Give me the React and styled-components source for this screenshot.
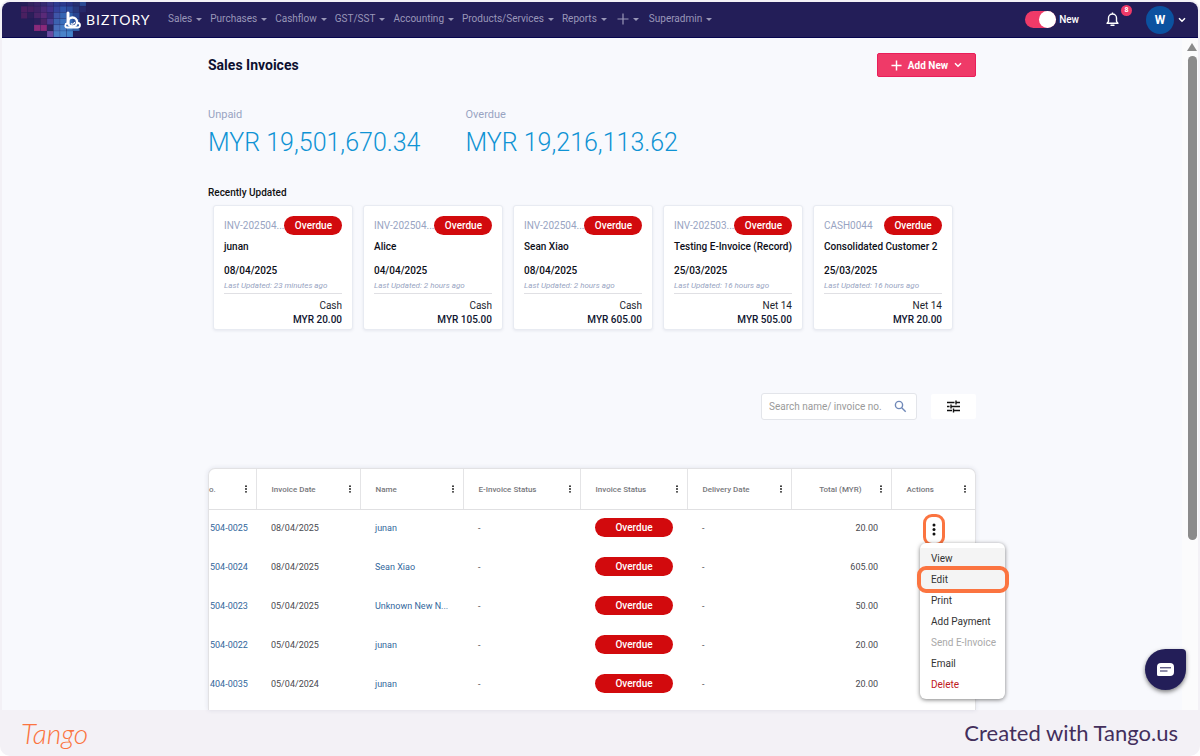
import React from 'react';
import styled, { createGlobalStyle } from 'styled-components';

const GlobalStyle = createGlobalStyle`
  *, *::before, *::after { box-sizing: border-box; }
  body {
    margin: 0;
    background: #ffffff;
    font-family: Roboto, "Liberation Sans", sans-serif;
    font-size: 10px;
    color: #1b1f2e;
  }
  button, input { font: inherit; color: inherit; }
  button { border: 0; padding: 0; background: none; cursor: pointer; }
  a { text-decoration: none; }
  h1, h2, p, dl, dd, dt, ul { margin: 0; padding: 0; }
`;

const Frame = styled.div`
  display: flex;
  flex-direction: column;
  min-height: 100vh;
  padding: 2px 0 0;
  border-radius: 10px;
  background: #f3f1f6;
`;

const AppWindow = styled.div`
  flex: 1;
  display: flex;
  flex-direction: column;
  margin: 0 2px;
  border-radius: 8px 8px 0 0;
  background: #f8f9fd;
`;

const NavBar = styled.header`
  display: flex;
  align-items: center;
  height: 36px;
  padding-right: 12px;
  border-bottom: 1px solid #06054f;
  border-radius: 8px 8px 0 0;
  background: #231e58;
  overflow: hidden;
`;

const Brand = styled.a`
  display: flex;
  align-items: center;
  position: relative;
  width: 166px;
  height: 100%;
  padding-left: 61px;
  gap: 4px;
  color: #ffffff;
  font: 400 14px/16px Lato, sans-serif;
  letter-spacing: 1px;
`;

const Mosaic = styled.svg`
  position: absolute;
  left: 19px;
  top: 0;
`;

const BrandMark = styled.svg`
  position: relative;
`;

const BrandName = styled.span`
  position: relative;
`;

const Menu = styled.nav`
  display: flex;
  align-items: center;
  gap: 8px;
  flex: 1;
`;

const MenuButton = styled.button`
  display: flex;
  align-items: center;
  gap: 4px;
  height: 24px;
  padding: 0 ${(p) => (p.$icon ? '2px' : '0')} 1px;
  color: #9a97b8;
  font-size: 10px;
  line-height: 16px;
  white-space: nowrap;

  &::after {
    content: '';
    border: 3px solid transparent;
    border-top-color: currentColor;
    border-bottom: 0;
  }
`;

const NavTools = styled.div`
  display: flex;
  align-items: center;
`;

const Switch = styled.label`
  display: flex;
  align-items: center;
  gap: 3px;
  margin-right: 27px;
  color: #ffffff;
  font-weight: 500;
  line-height: 16px;
`;

const SwitchInput = styled.input`
  appearance: none;
  display: flex;
  justify-content: flex-end;
  width: 31px;
  height: 17px;
  margin: 0;
  border-radius: 9px;
  background: #ef3a68;

  &::before {
    content: '';
    width: 17px;
    height: 17px;
    border-radius: 50%;
    background: #ffffff;
  }
`;

const BellButton = styled.button`
  position: relative;
  display: flex;
  margin-right: 27px;
`;

const BellCount = styled.span`
  position: absolute;
  left: 15px;
  top: -7px;
  width: 11px;
  height: 11px;
  border-radius: 50%;
  background: #ef3a68;
  color: #ffffff;
  font-size: 7px;
  font-weight: 700;
  line-height: 11px;
  text-align: center;
`;

const AccountButton = styled.button`
  display: flex;
  align-items: center;
  gap: 4px;
`;

const Avatar = styled.span`
  width: 28px;
  height: 28px;
  border-radius: 50%;
  background: #0b52a0;
  color: #ffffff;
  font-size: 12px;
  font-weight: 700;
  line-height: 28px;
  text-align: center;
`;

const Body = styled.div`
  flex: 1;
  display: flex;
  position: relative;
`;

const Main = styled.main`
  flex: 1;
  display: flex;
  justify-content: center;
`;

const Content = styled.div`
  display: flex;
  flex-direction: column;
  width: 100%;
  max-width: 768px;
`;

const PageHeader = styled.div`
  display: flex;
  justify-content: space-between;
  align-items: center;
  margin-top: 15px;
`;

const Title = styled.h1`
  color: #0d1030;
  font-size: 14px;
  font-weight: 700;
  line-height: 24px;
`;

const AddButton = styled.button`
  display: flex;
  align-items: center;
  justify-content: center;
  gap: 6px;
  width: 99px;
  height: 24px;
  border: 1px solid #e91e5a;
  border-radius: 2px;
  background: #ef3a68;
  color: #ffffff;
  font-weight: 700;
`;

const Totals = styled.dl`
  display: flex;
  gap: 45px;
  margin-top: 30px;
`;

const TotalLabel = styled.dt`
  color: #98a4c2;
  font-size: 11px;
  line-height: 16px;
`;

const TotalValue = styled.dd`
  margin-top: 5px;
  color: #0f93d4;
  font-size: 25px;
  font-weight: 300;
  line-height: 30px;
`;

const SectionTitle = styled.h2`
  margin-top: 27px;
  color: #111111;
  font-size: 10px;
  font-weight: 500;
  line-height: 16px;
`;

const Cards = styled.div`
  display: grid;
  grid-template-columns: repeat(5, 140px);
  gap: 10px;
  margin: 4px 0 0 5px;
`;

const Card = styled.article`
  display: flex;
  flex-direction: column;
  height: 125px;
  padding: 10px;
  border: 1px solid #e8ebf2;
  border-radius: 3px;
  background: #ffffff;
  box-shadow: 0 1px 3px #1e285014;
  line-height: 14px;
`;

const CardTop = styled.div`
  display: flex;
  align-items: center;
  justify-content: space-between;
`;

const CardNumber = styled.span`
  color: #98a4c2;
  white-space: nowrap;
`;

const Pill = styled.span`
  display: block;
  flex: none;
  width: ${(p) => (p.$wide ? '78px' : '58px')};
  border-radius: 10px;
  background: #d20a0d;
  color: #ffffff;
  font-size: 10px;
  font-weight: 500;
  line-height: 19px;
  text-align: center;
`;

const CardName = styled.p`
  margin-top: 5px;
  font-weight: 500;
  color: #0c0e18;
  white-space: nowrap;
`;

const CardDate = styled(CardName)`
  margin-top: 10px;
`;

const CardUpdated = styled.p`
  padding: 2px 0 1px;
  border-bottom: 1px solid #e0e0e4;
  color: #98a4c2;
  font-size: 8px;
  font-style: italic;
  line-height: 12px;
`;

const CardTerms = styled.p`
  margin-top: 5px;
  text-align: right;
`;

const CardAmount = styled.p`
  color: #101530;
  font-weight: 500;
  text-align: right;
`;

const Filters = styled.div`
  display: flex;
  justify-content: flex-end;
  align-items: center;
  gap: 14px;
  margin-top: 63px;
`;

const SearchBox = styled.label`
  display: flex;
  align-items: center;
  width: 156px;
  height: 27px;
  padding: 0 9px 0 7px;
  border: 1px solid #e3e5ea;
  border-radius: 3px;
  background: #ffffff;
`;

const SearchInput = styled.input`
  flex: 1;
  min-width: 0;
  padding: 0;
  border: 0;
  outline: 0;
  background: none;
  font-size: 10px;

  &::placeholder { color: #9a9a9a; opacity: 1; }
`;

const FilterButton = styled.button`
  display: flex;
  align-items: center;
  justify-content: center;
  width: 45px;
  height: 25px;
  border-radius: 2px;
  background: #ffffff;
`;

const TablePanel = styled.div`
  flex: 1;
  margin-top: 48px;
  padding-bottom: 6px;
  border: 1px solid #e2e2e4;
  border-bottom: 0;
  border-radius: 7px 7px 0 0;
  background: #ffffff;
  box-shadow: 0 0 5px #1e28501c;
`;

const Table = styled.table`
  width: 100%;
  border-collapse: collapse;
  table-layout: fixed;
`;

const HeadCell = styled.th`
  height: 40px;
  padding: 0;
  border-right: 1px solid #e4e4e6;
  border-bottom: 1px solid #e0e0e2;
  color: #77777c;
  font-size: 8px;
  font-weight: 500;

  &:last-child { border-right: 0; }
`;

const HeadInner = styled.div`
  display: flex;
  align-items: center;
  justify-content: ${(p) => (p.$right ? 'flex-end' : 'space-between')};
  gap: 17px;
  padding: 1px 8px 0 ${(p) => (p.$flush ? '0' : '15px')};
  white-space: nowrap;
`;

const HeadMenu = styled.button`
  display: flex;
`;

const Cell = styled.td`
  position: relative;
  height: 39px;
  padding: 0 13px 2px ${(p) => (p.$flush ? '1px' : '15px')};
  color: #4a4a50;
  font-size: 9px;
  line-height: 14px;
  text-align: ${(p) => (p.$align || 'left')};
  white-space: nowrap;
`;

const CellLink = styled.a`
  color: #33679c;
`;

const RowMenuButton = styled.button`
  position: absolute;
  left: 32px;
  top: 4px;
  display: flex;
  align-items: center;
  justify-content: center;
  width: 22px;
  height: 32px;
  border: 3px solid #fb7440;
  border-radius: 9px;
`;

const ActionMenu = styled.ul`
  position: absolute;
  z-index: 2;
  left: 29px;
  top: 33px;
  width: 85px;
  padding: 5px 0 4px;
  border-radius: 6px;
  background: #ffffff;
  box-shadow: 0 1px 4px #00000080;
  list-style: none;
`;

const ActionItem = styled.li`
  position: relative;
  background: ${(p) => (p.$shaded ? '#f4f4f4' : 'none')};
`;

const ActionButton = styled.button`
  display: block;
  width: 100%;
  padding-left: 11px;
  color: ${(p) => (p.$tone || '#333333')};
  font-size: 10px;
  line-height: 21px;
  text-align: left;
`;

const Highlight = styled.span`
  position: absolute;
  inset: -3px -4px -3px -3px;
  border: 4px solid #fb7440;
  border-radius: 9px;
  pointer-events: none;
`;

const ScrollTrack = styled.div`
  display: flex;
  flex-direction: column;
  align-items: center;
  width: 16px;
  padding: 5px 0 0 4px;
  background: #fbfbfc;
`;

const ScrollThumb = styled.div`
  flex: 484;
  width: 9px;
  margin-top: 5px;
  border-radius: 5px;
  background: #8b8b8b;
`;

const ScrollRest = styled.div`
  flex: 170;
`;

const ChatButton = styled.button`
  position: absolute;
  right: 12px;
  bottom: 20px;
  display: flex;
  align-items: center;
  justify-content: center;
  width: 41px;
  height: 41px;
  border-radius: 50% 4px 50% 50%;
  background: #231e58;
  box-shadow: 0 2px 4px #00000080;
`;

const Footer = styled.footer`
  display: flex;
  align-items: center;
  justify-content: space-between;
  height: 46px;
  padding: 0 22px 0 21px;
  color: #432f5c;
  font: 400 22px/46px Lato, sans-serif;
`;

const TangoLogo = styled.span`
  color: #fb7440;
  font: italic 300 28px/46px Lato, sans-serif;
`;

const mosaicRows = [
  ['#261e59', '#33235f', '#3a2468', '#362a70', '#3a3584', '#2f3b90', '#2c3a8c', '#2a3484', '#27306f', '#2c4b94'],
  ['#4d1f63', '#471f62', '#3f2266', '#4a2a78', '#42308a', '#34429c', '#3054aa', '#2d4c9c', '#28387c', '#26296a'],
  ['#4a2060', '#2c1f5a', '#4a2468', '#5a2a78', '#3a2a78', '#3f55a8', '#3565b2', '#3060ac', '#294590', null],
  [null, null, '#2c1f5c', '#4a2468', '#4a3a90', '#3c62b0', '#3a70bc', '#346cb8', '#2e529c', null],
  [null, null, '#8a2a7a', '#8a2a7a', '#2c2560', '#4a70bc', '#447cc4', '#3c78c0', '#3264ac', null],
  [null, null, null, null, '#6a4aa0', '#4a7cc4', '#4a84ca', '#4484ca', null, null],
];

const navItems = [
  'Sales', 'Purchases', 'Cashflow', 'GST/SST', 'Accounting', 'Products/Services', 'Reports', '+', 'Superadmin',
];

const cards = [
  ['INV-202504...', 'junan', '08/04/2025', '23 minutes ago', 'Cash', 'MYR 20.00'],
  ['INV-202504...', 'Alice', '04/04/2025', '2 hours ago', 'Cash', 'MYR 105.00'],
  ['INV-202504...', 'Sean Xiao', '08/04/2025', '2 hours ago', 'Cash', 'MYR 605.00'],
  ['INV-202503...', 'Testing E-Invoice (Record)', '25/03/2025', '16 hours ago', 'Net 14', 'MYR 505.00'],
  ['CASH0044', 'Consolidated Customer 2', '25/03/2025', '16 hours ago', 'Net 14', 'MYR 20.00'],
];

const columns = [
  ['o.', 47], ['Invoice Date', 104], ['Name', 103], ['E-Invoice Status', 117],
  ['Invoice Status', 107], ['Delivery Date', 104], ['Total (MYR)', 100], ['Actions', 84],
];

const rows = [
  ['504-0025', '08/04/2025', 'junan', '20.00'],
  ['504-0024', '08/04/2025', 'Sean Xiao', '605.00'],
  ['504-0023', '05/04/2025', 'Unknown New N...', '50.00'],
  ['504-0022', '05/04/2025', 'junan', '20.00'],
  ['404-0035', '05/04/2024', 'junan', '20.00'],
];

const actions = ['View', 'Edit', 'Print', 'Add Payment', 'Send E-Invoice', 'Email', 'Delete'];
const actionTones = { 'Send E-Invoice': '#a9a9a9', Delete: '#c01822' };

function Plus({ size, width }) {
  return (
    <svg width={size} height={size} viewBox="0 0 12 12" fill="none" stroke="currentColor" strokeWidth={width}>
      <path d="M6 0.5v11M0.5 6h11" />
    </svg>
  );
}

function Chevron() {
  return (
    <svg width="8" height="6" viewBox="0 0 8 6" fill="none" stroke="#ffffff" strokeWidth="1.5">
      <path d="M1 1.2l3 3 3-3" />
    </svg>
  );
}

function Dots({ large }) {
  return large ? (
    <svg width="4" height="13" viewBox="0 0 4 13" fill="#111111">
      <circle cx="2" cy="2" r="1.5" /><circle cx="2" cy="6.5" r="1.5" /><circle cx="2" cy="11" r="1.5" />
    </svg>
  ) : (
    <svg width="4" height="8" viewBox="0 0 4 8" fill="#111111">
      <circle cx="2" cy="1.2" r="0.9" /><circle cx="2" cy="4" r="0.9" /><circle cx="2" cy="6.8" r="0.9" />
    </svg>
  );
}

function Logo() {
  return (
    <Brand href="#home">
      <Mosaic width="66" height="36" viewBox="0 0 66 36" aria-hidden="true">
        {mosaicRows.map((cells, y) => cells.map((fill, x) => (
          fill && (
            <rect
              key={`${x}-${y}`}
              x={x * 6.5}
              y={y * 6.2 - 2}
              width="6.5"
              height="6.2"
              fill={fill}
              stroke="#231e58"
              strokeOpacity="0.25"
              strokeWidth="0.6"
            />
          )
        )))}
      </Mosaic>
      <BrandMark width="19" height="18" viewBox="0 0 19 18" fill="none" stroke="#ffffff" aria-hidden="true">
        <path d="M5 2v10" strokeWidth="3" strokeLinecap="round" />
        <circle cx="9.5" cy="11" r="4.5" strokeWidth="2.4" />
        <path d="M4 12.5c-2 .3-2.6 3.5.2 4h10.6c3-.4 2.8-4.2.2-4.5" strokeWidth="1.8" strokeLinecap="round" />
        <path d="M8 12.5a2 2 0 0 0 3.5-1.5" strokeWidth="1.2" />
      </BrandMark>
      <BrandName>BIZTORY</BrandName>
    </Brand>
  );
}

function InvoiceCard({ data }) {
  const [number, name, date, updated, terms, amount] = data;
  return (
    <Card>
      <CardTop><CardNumber>{number}</CardNumber><Pill>Overdue</Pill></CardTop>
      <CardName>{name}</CardName>
      <CardDate>{date}</CardDate>
      <CardUpdated>Last Updated: {updated}</CardUpdated>
      <CardTerms>{terms}</CardTerms>
      <CardAmount>{amount}</CardAmount>
    </Card>
  );
}

function RowActions() {
  return (
    <>
      <RowMenuButton aria-label="Row actions"><Dots large /></RowMenuButton>
      <ActionMenu>
        {actions.map((label) => (
          <ActionItem key={label} $shaded={label === 'View' || label === 'Edit'}>
            <ActionButton $tone={actionTones[label]} disabled={label === 'Send E-Invoice'}>{label}</ActionButton>
            {label === 'Edit' && <Highlight />}
          </ActionItem>
        ))}
      </ActionMenu>
    </>
  );
}

function InvoiceTable() {
  return (
    <TablePanel>
      <Table>
        <colgroup>
          {columns.map(([label, width]) => <col key={label} width={width} />)}
        </colgroup>
        <thead>
          <tr>
            {columns.map(([label], i) => (
              <HeadCell key={label} scope="col">
                <HeadInner $flush={i === 0} $right={label === 'Total (MYR)'}>
                  {label}
                  <HeadMenu aria-label={`${label} column menu`}><Dots /></HeadMenu>
                </HeadInner>
              </HeadCell>
            ))}
          </tr>
        </thead>
        <tbody>
          {rows.map(([number, date, name, total], i) => (
            <tr key={number}>
              <Cell $flush><CellLink href="#invoice">{number}</CellLink></Cell>
              <Cell>{date}</Cell>
              <Cell><CellLink href="#customer">{name}</CellLink></Cell>
              <Cell>-</Cell>
              <Cell><Pill $wide>Overdue</Pill></Cell>
              <Cell>-</Cell>
              <Cell $align="right">{total}</Cell>
              <Cell>{i === 0 && <RowActions />}</Cell>
            </tr>
          ))}
        </tbody>
      </Table>
    </TablePanel>
  );
}

export default function App() {
  return (
    <>
      <GlobalStyle />
      <Frame>
        <AppWindow>
          <NavBar>
            <Logo />
            <Menu>
              {navItems.map((item) => (
                <MenuButton key={item} $icon={item === '+'} aria-label={item === '+' ? 'Add menu' : undefined}>
                  {item === '+' ? <Plus size="12" width="1.2" /> : item}
                </MenuButton>
              ))}
            </Menu>
            <NavTools>
              <Switch><SwitchInput type="checkbox" defaultChecked />New</Switch>
              <BellButton aria-label="Notifications">
                <svg width="13" height="15" viewBox="0 0 13 15" fill="none" stroke="#ffffff" strokeWidth="1.4" strokeLinejoin="round">
                  <path d="M1 11.3h11l-1.5-2V6a4 4 0 0 0-8 0v3.3zM6.5 2V.6" />
                  <path d="M5 13.3h3" strokeLinecap="round" />
                </svg>
                <BellCount>8</BellCount>
              </BellButton>
              <AccountButton aria-label="Account"><Avatar>W</Avatar><Chevron /></AccountButton>
            </NavTools>
          </NavBar>
          <Body>
            <Main>
              <Content>
                <PageHeader>
                  <Title>Sales Invoices</Title>
                  <AddButton><Plus size="11" width="1.6" />Add New<Chevron /></AddButton>
                </PageHeader>
                <Totals>
                  <div><TotalLabel>Unpaid</TotalLabel><TotalValue>MYR 19,501,670.34</TotalValue></div>
                  <div><TotalLabel>Overdue</TotalLabel><TotalValue>MYR 19,216,113.62</TotalValue></div>
                </Totals>
                <SectionTitle>Recently Updated</SectionTitle>
                <Cards>
                  {cards.map((card, i) => <InvoiceCard key={i} data={card} />)}
                </Cards>
                <Filters>
                  <SearchBox>
                    <SearchInput type="text" aria-label="Search" placeholder="Search name/ invoice no." />
                    <svg width="13" height="13" viewBox="0 0 13 13" fill="none" stroke="#7089b8" strokeWidth="1.4">
                      <circle cx="5" cy="5" r="3.6" /><path d="M7.7 7.7l4 4" />
                    </svg>
                  </SearchBox>
                  <FilterButton aria-label="Filters">
                    <svg width="13" height="13" viewBox="0 0 13 13" fill="none" stroke="#111111" strokeWidth="1.4">
                      <path d="M0 2.500h7.500M9 2.500H13M9 .5v4M0 6.500h2.500M4 6.500h9M4 4.500v4M0 10.500h5M6.500 10.500H13M6.500 8.500v4" />
                    </svg>
                  </FilterButton>
                </Filters>
                <InvoiceTable />
              </Content>
            </Main>
            <ScrollTrack aria-hidden="true">
              <svg width="10" height="8" viewBox="0 0 10 8" fill="#8b8b8b"><path d="M5 0l5 8H0z" /></svg>
              <ScrollThumb />
              <ScrollRest />
            </ScrollTrack>
            <ChatButton aria-label="Open chat">
              <svg width="17" height="14" viewBox="0 0 17 14">
                <path d="M4 0h9a4 4 0 0 1 4 4v5a4 4 0 0 1-4 4H1.500A1.500 1.500 0 0 1 0 11.500V4a4 4 0 0 1 4-4z" fill="#ffffff" />
                <path d="M3 4.800h11M3 8h7.500" stroke="#231e58" strokeWidth="1" />
              </svg>
            </ChatButton>
          </Body>
        </AppWindow>
        <Footer>
          <TangoLogo>Tango</TangoLogo>
          <span>Created with Tango.us</span>
        </Footer>
      </Frame>
    </>
  );
}
